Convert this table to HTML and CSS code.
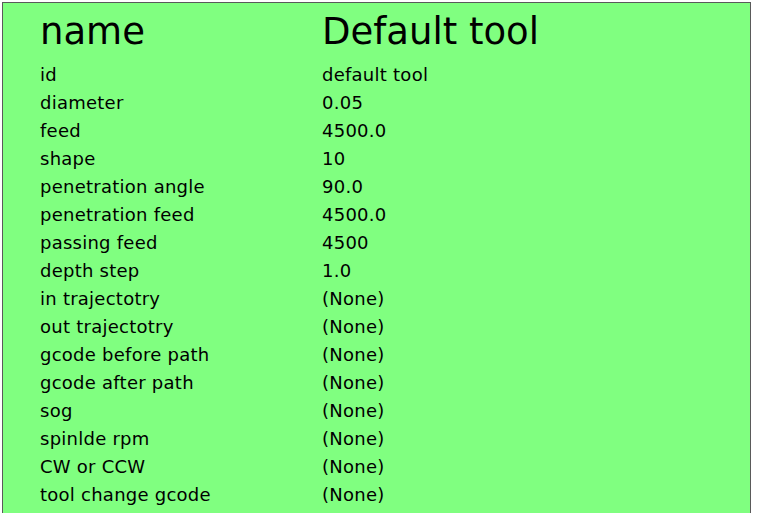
FILE: index.html
```html
<!DOCTYPE html>
<html>
<head>
<meta charset="utf-8">
<link rel="stylesheet" href="styles.css">
</head>
<body>
<div class="panel">
  <div class="head">
    <div class="key">name</div>
    <div class="val">Default tool</div>
  </div>
  <div class="rows">
    <div class="key">id</div><div class="val">default tool</div>
    <div class="key">diameter</div><div class="val">0.05</div>
    <div class="key">feed</div><div class="val">4500.0</div>
    <div class="key">shape</div><div class="val">10</div>
    <div class="key">penetration angle</div><div class="val">90.0</div>
    <div class="key">penetration feed</div><div class="val">4500.0</div>
    <div class="key">passing feed</div><div class="val">4500</div>
    <div class="key">depth step</div><div class="val">1.0</div>
    <div class="key">in trajectotry</div><div class="val">(None)</div>
    <div class="key">out trajectotry</div><div class="val">(None)</div>
    <div class="key">gcode before path</div><div class="val">(None)</div>
    <div class="key">gcode after path</div><div class="val">(None)</div>
    <div class="key">sog</div><div class="val">(None)</div>
    <div class="key">spinlde rpm</div><div class="val">(None)</div>
    <div class="key">CW or CCW</div><div class="val">(None)</div>
    <div class="key">tool change gcode</div><div class="val">(None)</div>
  </div>
</div>
</body>
</html>
```
FILE: styles.css
```css
html, body {
  margin: 0;
  padding: 0;
  background: #ffffff;
}
body {
  font-family: "DejaVu Sans", Verdana, sans-serif;
  color: #000;
  overflow: hidden;
  height: 513px;
}
.panel {
  margin: 2px 0 0 2px;
  width: 749px;
  height: 560px;
  background: #80ff80;
  border: 1px solid #5a5a5a;
  border-bottom: none;
  padding: 8px 0 0 37px;
  box-sizing: border-box;
}
.head {
  display: grid;
  grid-template-columns: 282px 1fr;
  font-size: 37px;
  line-height: 42px;
}
.rows {
  margin-top: 8px;
  display: grid;
  grid-template-columns: 282px 1fr;
  font-size: 18px;
  line-height: 28px;
  letter-spacing: 0.25px;
}
```
